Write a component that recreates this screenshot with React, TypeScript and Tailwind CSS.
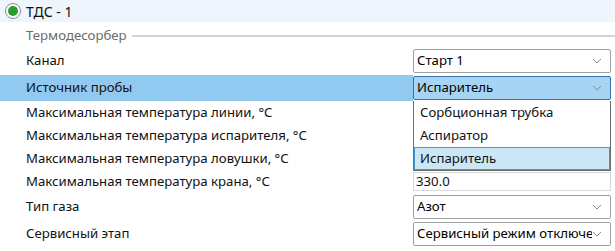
import React from 'react';

const Chevron: React.FC = () => (
  <svg width="10" height="6" viewBox="0 0 10 6" className="shrink-0">
    <polyline points="1,1 5,5 9,1" fill="none" stroke="#8a8a8a" strokeWidth="1" />
  </svg>
);

interface SelectProps {
  value: string;
  active?: boolean;
}

const Select: React.FC<SelectProps> = ({ value, active }) => (
  <div
    className={`flex items-center h-[24px] w-[198px] pl-[3px] pr-[8px] rounded-[2px] border overflow-hidden ${
      active ? 'bg-[#a7d4f2] border-[#3572b0]' : 'bg-white border-[#a0a0a0]'
    }`}
  >
    <span className="flex-1 whitespace-nowrap overflow-hidden text-black">{value}</span>
    <Chevron />
  </div>
);

const TextInput: React.FC<{ value: string }> = ({ value }) => (
  <div className="flex items-center h-[19px] w-[198px] pl-[2px] border border-[#d9d9d9] bg-white">
    {value}
  </div>
);

const App: React.FC = () => {
  return (
    <div
      className="w-[615px] h-[251px] overflow-hidden bg-white text-[13.2px] text-[#111] relative"
      style={{ fontFamily: '"Noto Sans", "Open Sans", sans-serif' }}
    >
      {/* Device header */}
      <div className="flex items-center h-[22px] bg-[#eef5fd] pl-[5px]">
        <div className="flex items-center justify-center w-[16px] h-[16px] rounded-full border border-[#8a8a8a] bg-white">
          <div className="w-[10px] h-[10px] rounded-full bg-[#2a9d2a]" />
        </div>
        <span className="ml-[5px] text-[14px]">ТДС - 1</span>
      </div>

      {/* Section */}
      <div className="flex items-center h-[27px] pl-[26px]">
        <span className="text-[#6b6b6b]">Термодесорбер</span>
        <div className="flex-1 ml-[5px] h-[2px] bg-[#d4d4d4]" />
      </div>

      {/* Rows */}
      <div className="flex flex-col">
        <div className="flex items-start h-[26px]">
          <div className="w-[413px] pl-[26px] pt-[2px]">Канал</div>
          <Select value="Старт 1" />
        </div>
        <div className="flex items-center h-[26px]">
          <div className="w-[413px] h-full pl-[26px] flex items-center bg-[#92c9f0]">Источник пробы</div>
          <Select value="Испаритель" active />
        </div>
        <div className="flex items-center h-[23px]">
          <div className="w-[413px] pl-[26px]">Максимальная температура линии, °С</div>
          <TextInput value="" />
        </div>
        <div className="flex items-center h-[23px]">
          <div className="w-[413px] pl-[26px]">Максимальная температура испарителя, °С</div>
          <TextInput value="" />
        </div>
        <div className="flex items-center h-[23px]">
          <div className="w-[413px] pl-[26px]">Максимальная температура ловушки, °С</div>
          <TextInput value="" />
        </div>
        <div className="flex items-center h-[23px]">
          <div className="w-[413px] pl-[26px]">Максимальная температура крана, °С</div>
          <TextInput value="330.0" />
        </div>
        <div className="flex items-center h-[27px]">
          <div className="w-[413px] pl-[26px]">Тип газа</div>
          <Select value="Азот" />
        </div>
        <div className="flex items-center h-[27px]">
          <div className="w-[413px] pl-[26px]">Сервисный этап</div>
          <Select value="Сервисный режим отключен" />
        </div>
      </div>

      {/* Open dropdown list */}
      <div className="absolute left-[413px] top-[101px] w-[198px] bg-white border border-[#6e6e6e] border-t-0 flex flex-col">
        <div className="h-[23px] flex items-center pl-[6px]">Сорбционная трубка</div>
        <div className="h-[23px] flex items-center pl-[6px]">Аспиратор</div>
        <div className="h-[23px] flex items-center pl-[5px] bg-[#cbe7f6] border border-[#3d9ad6]">Испаритель</div>
      </div>
    </div>
  );
};

export default App;
